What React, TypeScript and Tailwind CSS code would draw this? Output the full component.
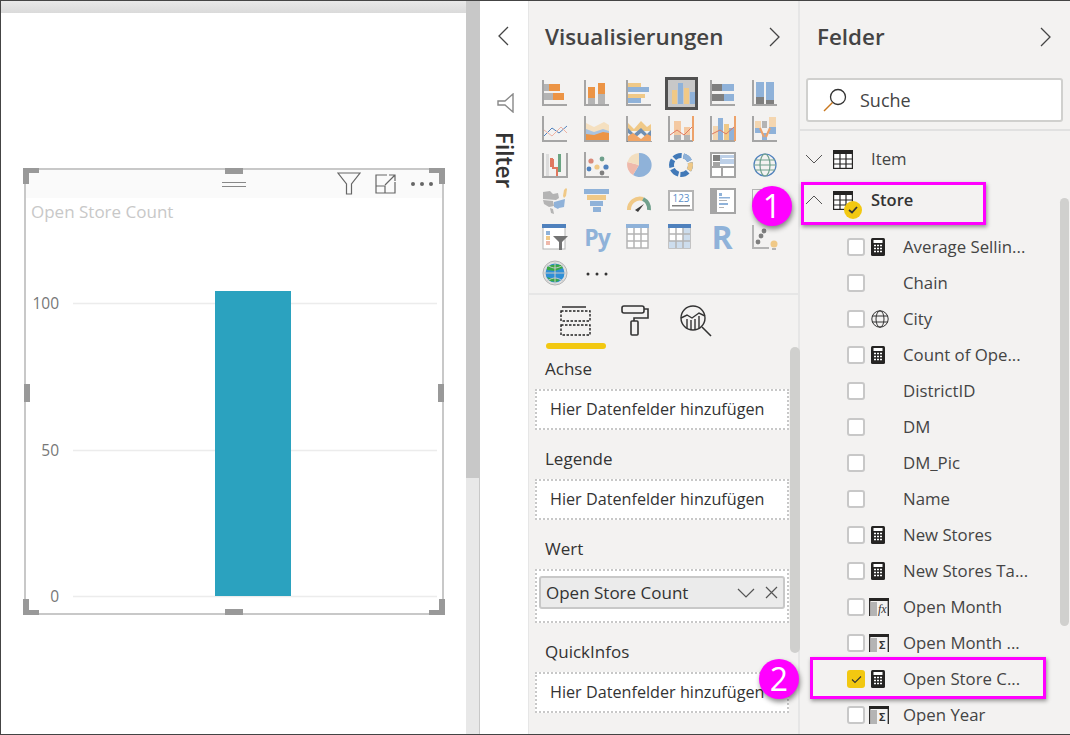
import type { ReactNode } from 'react'

const OR = '#ec9445'
const GR = '#b4b4b4'
const DG = '#7f7f7f'
const BL = '#8fb2d9'
const TN = '#f0c987'
const AX = '#a5a5a5'

function Axis() {
  return <path d="M1 0v25h24" fill="none" stroke={AX} strokeWidth="2" />
}

function Ic({ children }: { children: ReactNode }) {
  return (
    <svg width="26" height="26" viewBox="0 0 26 26" className="block">
      {children}
    </svg>
  )
}

function R({ x, y, w, h, f }: { x: number; y: number; w: number; h: number; f: string }) {
  return <rect x={x} y={y} width={w} height={h} fill={f} />
}

const vizIcons: ReactNode[] = [
  <Ic><Axis /><R x={2} y={4} w={5} h={7} f={GR} /><R x={7} y={4} w={11} h={7} f={OR} /><R x={2} y={13} w={9} h={7} f={GR} /><R x={11} y={13} w={11} h={7} f={OR} /></Ic>,
  <Ic><Axis /><R x={4} y={7} w={7} h={11} f={OR} /><R x={4} y={18} w={7} h={6} f={GR} /><R x={14} y={3} w={7} h={11} f={OR} /><R x={14} y={14} w={7} h={10} f={GR} /></Ic>,
  <Ic><Axis /><R x={2} y={3} w={13} h={4} f={TN} /><R x={2} y={7} w={21} h={5} f={BL} /><R x={2} y={14} w={17} h={4} f={TN} /><R x={2} y={18} w={13} h={5} f={BL} /></Ic>,
  <div className="w-[33px] h-[33px] bg-[#c8c8c8] border-[3px] border-[#505050] flex items-end gap-[1px] pl-[4px] pb-[3px]">
    <div className="w-[5px] h-[14px] bg-[#f0c987]" />
    <div className="w-[5px] h-[21px] bg-[#8fb2d9]" />
    <div className="w-[5px] h-[16px] bg-[#f0c987]" />
    <div className="w-[5px] h-[12px] bg-[#8fb2d9]" />
  </div>,
  <Ic><Axis /><R x={2} y={4} w={10} h={7} f={DG} /><R x={12} y={4} w={12} h={7} f={BL} /><R x={2} y={14} w={12} h={7} f={DG} /><R x={14} y={14} w={10} h={7} f={BL} /></Ic>,
  <Ic><Axis /><R x={4} y={2} w={8} h={15} f={BL} /><R x={4} y={17} w={8} h={7} f={DG} /><R x={14} y={2} w={8} h={18} f={BL} /><R x={14} y={20} w={8} h={4} f={DG} /></Ic>,

  <Ic><Axis /><path d="M2 20l8-8 7 5 8-7" fill="none" stroke="#4f81bd" strokeWidth="1" /><path d="M2 14l8 6 9-9 6 6" fill="none" stroke="#eeb3a4" strokeWidth="1" /></Ic>,
  <Ic><Axis /><path d="M2 7l8 4 10-5 5 3v15H2z" fill="#f5e0c0" /><path d="M2 13l8 3 9-3 6 2v9H2z" fill="#a9c3e0" /><path d="M2 18l8 1 9-3 6 1v7H2z" fill={OR} /></Ic>,
  <Ic><path d="M1 0v26h25" fill="none" stroke="#5a5a5a" strokeWidth="1" /><path d="M2 7l6 6 7-8 6 6 4-3v7H2z" fill={TN} /><path d="M2 12l6 6 7-6 6 6 4-4v6l-4 2-6-5-6 5-7-5z" fill="#6f8fb3" /><path d="M2 20l5-3 8 6 6-5 4 2v5H2z" fill="#f0a566" /></Ic>,
  <Ic><Axis /><R x={6} y={5} w={7} h={14} f="#f4c9a2" /><R x={6} y={19} w={7} h={5} f={GR} /><R x={16} y={11} w={6} h={8} f="#f4c9a2" /><R x={16} y={19} w={6} h={5} f={GR} /><R x={24} y={0} w={2} h={25} f="#eda26a" /><path d="M2 19l7-5 7 5 8-8" fill="none" stroke="#e0785f" strokeWidth="1" /></Ic>,
  <Ic><Axis /><R x={3} y={10} w={5} h={14} f="#f4d6b0" /><R x={8} y={2} w={5} h={22} f={BL} /><R x={14} y={8} w={5} h={16} f={TN} /><R x={19} y={12} w={5} h={12} f={BL} /><R x={24} y={0} w={2} h={25} f="#eda26a" /><path d="M2 18l8-4 6 4 8-7" fill="none" stroke="#e0785f" strokeWidth="1" /></Ic>,
  <Ic><Axis /><R x={3} y={5} w={6} h={7} f="#f4d6b0" /><R x={3} y={12} w={6} h={5} f={BL} /><R x={10} y={5} w={5} h={7} f={GR} /><R x={10} y={17} w={5} h={7} f={BL} /><R x={17} y={1} w={7} h={10} f="#f4d6b0" /><R x={17} y={11} w={7} h={7} f={BL} /><path d="M8 12l4 9M18 12l-4 9" stroke="#eda26a" strokeWidth="2" /></Ic>,

  <Ic><path d="M1 1v24h24V1" fill="none" stroke={AX} strokeWidth="2" /><R x={4} y={2} w={3} h={22} f="#dcdcdc" /><R x={8} y={6} w={3} h={9} f="#e0785f" /><path d="M11 7v9h4v8" fill="none" stroke="#e0785f" strokeWidth="2" /><R x={16} y={2} w={3} h={18} f="#6aa583" /></Ic>,
  <Ic><Axis /><circle cx="7" cy="9" r="2.6" fill="#d98a7a" /><circle cx="18" cy="7" r="2.4" fill="#6fa08c" /><circle cx="13" cy="15" r="2.6" fill={TN} /><circle cx="5" cy="17" r="2.4" fill="#4f81bd" /><circle cx="22" cy="15" r="2.6" fill="#4f81bd" /><circle cx="18" cy="21" r="2.4" fill={DG} /></Ic>,
  <Ic><path d="M13 13V1a12 12 0 1 1-6 22z" fill={BL} /><path d="M13 13L7 23A12 12 0 0 1 1.4 10z" fill="#efb9ab" /><path d="M13 13L1.4 10A12 12 0 0 1 13 1z" fill="#f3dfc0" /></Ic>,
  <Ic>
    <g transform="rotate(-75 13 13)">
      <circle cx="13" cy="13" r="9.5" fill="none" stroke="#4179b8" strokeWidth="5" pathLength="100" strokeDasharray="13.5 3.17" />
      <circle cx="13" cy="13" r="9.5" fill="none" stroke={TN} strokeWidth="5" pathLength="100" strokeDasharray="13.5 86.5" strokeDashoffset="-16.67" />
      <circle cx="13" cy="13" r="9.5" fill="none" stroke={BL} strokeWidth="5" pathLength="100" strokeDasharray="13.5 86.5" />
    </g>
  </Ic>,
  <Ic><rect x="1" y="1" width="24" height="24" fill="#fff" stroke={AX} strokeWidth="2" /><R x={3} y={3} w={7} h={6} f={DG} /><R x={10} y={3} w={14} h={9} f="#bdd0e8" /><R x={3} y={10} w={7} h={4} f={AX} /><R x={12} y={6} w={12} h={1} f="#fff" /><R x={2} y={14} w={22} h={2} f={AX} /><R x={11} y={15} w={2} h={9} f={AX} /></Ic>,
  <Ic><circle cx="13" cy="13" r="11" fill="none" stroke="#4f81bd" strokeWidth="1.2" /><ellipse cx="13" cy="13" rx="5" ry="11" fill="none" stroke="#6fa08c" strokeWidth="1.2" /><path d="M3 8h20M2 13h22M3 18h20" stroke="#6fa08c" strokeWidth="1" /></Ic>,

  <Ic><path d="M1 4l7-1 3 3 5-1 1 5-3 2-13-1z" fill={GR} /><path d="M1 12l10 1 1 5-5 1-5-3z" fill={GR} /><path d="M12 14l11-3-1 8-5 1-1 1-4-2z" fill={BL} /><path d="M8 20l3 1 1 5-3-1z" fill={GR} /><path d="M22 2l2-2 1 1-1 7-2 2-1-2z" fill={TN} /></Ic>,
  <Ic><R x={0} y={1} w={25} h={5} f={BL} /><R x={3} y={7} w={19} h={5} f={TN} /><R x={6} y={13} w={13} h={5} f={BL} /><R x={9} y={19} w={8} h={5} f={BL} /></Ic>,
  <Ic><path d="M3 23a11 11 0 0 1 14-11" transform="translate(0 -1)" fill="none" stroke={TN} strokeWidth="4" /><path d="M17 11a11 11 0 0 1 6 11" fill="none" stroke="#6fa08c" strokeWidth="4" /><path d="M9 22l9-6-6 8z" fill="#3c3c3c" /></Ic>,
  <Ic><rect x="1" y="3" width="24" height="19" fill="#fff" stroke={GR} strokeWidth="2" /><text x="13" y="14" textAnchor="middle" fontSize="10" fontFamily="'Open Sans', sans-serif" fill="#5d8fc9">123</text><R x={4} y={17} w={18} h={1.5} f={DG} /></Ic>,
  <Ic><rect x="1" y="1" width="24" height="24" fill="#fff" stroke={AX} strokeWidth="2" /><R x={2} y={2} w={5} h={22} f={AX} /><R x={9} y={5} w={3} h={3} f={BL} /><R x={9} y={9} w={11} h={1.5} f={BL} /><R x={9} y={12} w={8} h={1} f={GR} /><R x={9} y={15} w={9} h={2} f={BL} /><R x={9} y={19} w={5} h={1} f={GR} /></Ic>,
  <Ic><R x={0} y={1} w={12} h={18} f={GR} /><R x={1} y={2} w={11} h={16} f="#f3f2f1" /></Ic>,

  <Ic><R x={1} y={1} w={22} h={24} f="#fff" /><rect x="1" y="1" width="22" height="24" fill="none" stroke={GR} strokeWidth="1" /><R x={0} y={0} w={24} h={4} f="#4f81bd" /><R x={4} y={7} w={4} h={4} f="#8fb2d9" /><R x={4} y={12} w={4} h={4} f={TN} /><R x={4} y={17} w={4} h={4} f="#efb9ab" /><path d="M11 12h15l-6 6v8h-3v-8z" fill="#737373" /></Ic>,
  <span className="text-[23px] leading-none font-bold text-[#8fb2d9] tracking-[-1px]">Py</span>,
  <Ic><rect x="1" y="2" width="21" height="22" fill="#fff" stroke={GR} strokeWidth="1.5" /><R x={0} y={0} w={23} h={4} f={BL} /><path d="M8 4v20M15 4v20M1 10h21M1 17h21" stroke={GR} strokeWidth="1.5" /></Ic>,
  <Ic><rect x="1" y="2" width="21" height="22" fill="#fff" stroke={GR} strokeWidth="1.5" /><R x={0} y={0} w={23} h={4} f="#4f81bd" /><R x={15} y={4} w={7} h={20} f="#cddded" /><R x={1} y={17} w={21} h={7} f="#cddded" /><path d="M8 4v20M15 4v20M1 10h21M1 17h21" stroke={GR} strokeWidth="1.5" /></Ic>,
  <span className="text-[32px] leading-none font-bold text-[#8fb2d9] -ml-[2px]">R</span>,
  <Ic><path d="M1 1v23h16" fill="none" stroke={GR} strokeWidth="2" /><circle cx="12" cy="7" r="2.4" fill={DG} /><circle cx="9" cy="12" r="2.4" fill={DG} /><circle cx="6" cy="18" r="2.4" fill={DG} /><circle cx="22" cy="20" r="3.5" fill={TN} /><R x={20} y={24} w={4} h={2} f={GR} /></Ic>,

  <Ic><circle cx="13" cy="13" r="12" fill="#dfdfdf" stroke={GR} strokeWidth="1" /><circle cx="13" cy="13" r="9.5" fill="#2f8fd6" /><path d="M5 7c5-3 10-3 14-2l2 3-8 3-8-1zM5 17c4 2 8 0 10 2l3 1-4 2-6-1z" fill="#39a845" /><path d="M13 1v24M1 13h24M5 5c6 4 10 4 16 0M5 21c6-4 10-4 16 0" fill="none" stroke="#c9c9c9" strokeWidth="1" /></Ic>,
  <Ic><circle cx="4" cy="14" r="1.5" fill="#333" /><circle cx="13" cy="14" r="1.5" fill="#333" /><circle cx="22" cy="14" r="1.5" fill="#333" /></Ic>,
]

function VizGrid() {
  return (
    <div className="grid grid-cols-[repeat(6,42px)] auto-rows-[36px] pl-[5px] mt-[2px]">
      {vizIcons.map((icon, idx) => (
        <div key={idx} className="flex items-center justify-center">
          {icon}
        </div>
      ))}
    </div>
  )
}

function Well({ label, children, tall }: { label: string; children?: ReactNode; tall?: boolean }) {
  return (
    <div className="mb-[9px]">
      <div className="h-[40px] flex items-center pl-[16px] text-[17px] text-[#333]">{label}</div>
      <div className={`ml-[6px] w-[254px] bg-white border-2 border-dotted border-[#c8c8c8] ${tall ? 'h-[54px] pt-[5px] px-[2px]' : 'h-[41px] flex items-center pl-[13px]'} text-[16.2px] text-[#333]`}>
        {children ?? 'Hier Datenfelder hinzufügen'}
      </div>
    </div>
  )
}

function VizPane() {
  return (
    <div className="relative w-[272px] h-full bg-[#f3f2f1] border-r-2 border-l border-[#e6e6e6] shrink-0">
      <div className="h-[72px] flex items-center justify-between pl-[16px] pr-[17px]">
        <span className="text-[22.4px] font-semibold text-[#444]">Visualisierungen</span>
        <svg width="12" height="20" viewBox="0 0 12 20" fill="none" stroke="#444" strokeWidth="1.3"><path d="M1 1l9 9-9 9" /></svg>
      </div>
      <VizGrid />
      <div className="h-[2px] bg-[#e6e6e6] mt-[2px]" />
      <div className="flex pl-[17px] h-[54px]">
        <div className="w-[60px] flex flex-col items-center">
          <svg className="mt-[10px]" width="32" height="32" viewBox="0 0 32 32" fill="none" stroke="#222" strokeWidth="1.4">
            <path d="M2 2h24" />
            <rect x="1" y="6" width="29" height="10" strokeDasharray="2.5 1.5" />
            <rect x="1" y="20" width="29" height="10" strokeDasharray="2.5 1.5" />
          </svg>
          <div className="mt-auto w-[60px] h-[6px] rounded-full bg-[#f2c811]" />
        </div>
        <div className="w-[60px] flex justify-center">
          <svg className="mt-[10px]" width="30" height="32" viewBox="0 0 30 32" fill="none" stroke="#333" strokeWidth="1.6">
            <rect x="1" y="1" width="22" height="7" rx="2" />
            <path d="M23 4h4v9H13v3" />
            <rect x="10" y="16" width="7" height="14" rx="1" />
          </svg>
        </div>
        <div className="w-[60px] flex justify-center">
          <svg className="mt-[10px]" width="32" height="32" viewBox="0 0 32 32" fill="none" stroke="#333" strokeWidth="1.4">
            <circle cx="13" cy="13" r="12" />
            <path d="M1 13l6-3 5 3 7-5 6 3" />
            <path d="M7 14v9M11 15v10M15 14v11M19 11v12" />
            <path d="M22 22l9 9" strokeWidth="1.6" />
          </svg>
        </div>
      </div>
      <Well label="Achse" />
      <Well label="Legende" />
      <Well label="Wert" tall>
        <div className="h-[33px] bg-[#ebebeb] border-2 border-[#c8c8c8] rounded-[3px] flex items-center pl-[5px] pr-[5px] text-[17px]">
          <span className="flex-1">Open Store Count</span>
          <svg width="18" height="10" viewBox="0 0 18 10" fill="none" stroke="#555" strokeWidth="1.2"><path d="M1 1l8 8 8-8" /></svg>
          <svg className="ml-[10px]" width="13" height="13" viewBox="0 0 13 13" fill="none" stroke="#555" strokeWidth="1.2"><path d="M1 1l11 11M12 1L1 12" /></svg>
        </div>
      </Well>
      <Well label="QuickInfos" />
      {/* scroll thumb */}
      <div className="absolute left-[261px] top-[346px] w-[10px] h-[306px] rounded-full bg-[#d0d0ce]" />
    </div>
  )
}

function TableIcon() {
  return (
    <svg width="20" height="19" viewBox="0 0 20 19" fill="none" stroke="#252423" strokeWidth="1.2">
      <rect x="0.6" y="0.6" width="18.8" height="17.8" fill="#fff" />
      <rect x="0" y="0" width="20" height="4" fill="#252423" stroke="none" />
      <path d="M7 4v14M13 4v14M1 9h18M1 14h18" />
    </svg>
  )
}

function CalcIcon() {
  return (
    <svg width="14" height="18" viewBox="0 0 14 18">
      <rect width="14" height="18" rx="1.5" fill="#252423" />
      <rect x="2.5" y="2" width="9" height="3" fill="#fff" />
      <path d="M3 7.5h8M3 10.5h8M3 13.5h8" stroke="#fff" strokeWidth="1.6" strokeDasharray="2 1" />
    </svg>
  )
}

function GlobeIcon() {
  return (
    <svg width="18" height="18" viewBox="0 0 18 18" fill="none" stroke="#333" strokeWidth="1">
      <circle cx="9" cy="9" r="8.2" />
      <ellipse cx="9" cy="9" rx="4" ry="8.2" />
      <path d="M1 6h16M1 12h16" />
    </svg>
  )
}

function ColIcon({ fx }: { fx?: boolean }) {
  return (
    <svg className="-ml-[2px] overflow-visible" width="20" height="18" viewBox="0 0 20 18" fill="none" stroke="#252423">
      <path d="M0.7 18V0.7H19.3V18" strokeWidth="1.3" fill="#f3f2f1" />
      <rect x="0" y="0" width="20" height="3" fill="#252423" stroke="none" />
      <rect x="2" y="4" width="6" height="14" fill="#b4b4b4" stroke="none" />
      {fx ? (
        <text x="9" y="15" fontSize="12" fontStyle="italic" fontFamily="'Liberation Serif', serif" fill="#333" stroke="none">fx</text>
      ) : (
        <text x="10" y="15" fontSize="11" fontWeight="700" fontFamily="'Open Sans', sans-serif" fill="#333" stroke="none">Σ</text>
      )}
    </svg>
  )
}

const fields: { name: string; icon?: ReactNode; checked?: boolean }[] = [
  { name: 'Average Sellin...', icon: <CalcIcon /> },
  { name: 'Chain' },
  { name: 'City', icon: <GlobeIcon /> },
  { name: 'Count of Ope...', icon: <CalcIcon /> },
  { name: 'DistrictID' },
  { name: 'DM' },
  { name: 'DM_Pic' },
  { name: 'Name' },
  { name: 'New Stores', icon: <CalcIcon /> },
  { name: 'New Stores Ta...', icon: <CalcIcon /> },
  { name: 'Open Month', icon: <ColIcon fx /> },
  { name: 'Open Month ...', icon: <ColIcon /> },
  { name: 'Open Store C...', icon: <CalcIcon />, checked: true },
  { name: 'Open Year', icon: <ColIcon /> },
]

function FieldRow({ name, icon, checked }: { name: string; icon?: ReactNode; checked?: boolean }) {
  return (
    <div className="h-[36px] flex items-center pl-[47px] text-[16.8px] text-[#444]">
      {checked ? (
        <div className="w-[18px] h-[18px] rounded-[3px] bg-[#f2c811] flex items-center justify-center">
          <svg width="11" height="9" viewBox="0 0 11 9" fill="none" stroke="#333" strokeWidth="1.1"><path d="M1 4.5l3 3 6-6" /></svg>
        </div>
      ) : (
        <div className="w-[18px] h-[18px] rounded-[3px] bg-white border-2 border-[#c8c8c8]" />
      )}
      <div className="w-[38px] pl-[6px] flex items-center">{icon}</div>
      <span>{name}</span>
    </div>
  )
}

function FieldsPane() {
  return (
    <div className="relative flex-1 h-full bg-[#f3f2f1]">
      <div className="h-[72px] flex items-center justify-between pl-[17px] pr-[18px]">
        <span className="text-[22.4px] font-semibold text-[#444]">Felder</span>
        <svg width="12" height="20" viewBox="0 0 12 20" fill="none" stroke="#444" strokeWidth="1.3"><path d="M1 1l9 9-9 9" /></svg>
      </div>
      <div className="ml-[6px] mt-[5px] w-[257px] h-[44px] bg-white border-2 border-[#d0d0ce] rounded-[3px] flex items-center pl-[15px] text-[18px] text-[#444]">
        <svg width="24" height="24" viewBox="0 0 24 24" fill="none">
          <circle cx="15" cy="9" r="7.5" stroke="#333" strokeWidth="1.3" />
          <path d="M9.5 14.5L1 23" stroke="#c9781f" strokeWidth="1.5" />
        </svg>
        <span className="ml-[13px]">Suche</span>
      </div>
      <div className="h-[2px] bg-[#e1e1e1] mt-[7px]" />
      <div className="pt-[10px]">
        <div className="h-[36px] flex items-center pl-[5px] text-[16.8px] text-[#444]">
          <svg width="18" height="10" viewBox="0 0 18 10" fill="none" stroke="#555" strokeWidth="1"><path d="M1 1l8 8 8-8" /></svg>
          <div className="ml-[10px] w-[38px]"><TableIcon /></div>
          <span>Item</span>
        </div>
        <div className="h-[36px] mt-[5px] flex items-center pl-[5px] text-[16.5px] font-semibold text-[#333]">
          <svg width="18" height="10" viewBox="0 0 18 10" fill="none" stroke="#555" strokeWidth="1"><path d="M1 9l8-8 8 8" /></svg>
          <div className="ml-[10px] w-[38px] relative">
            <TableIcon />
            <div className="absolute left-[11px] top-[10px] w-[18px] h-[18px] rounded-full bg-[#f2c811] flex items-center justify-center">
              <svg width="10" height="8" viewBox="0 0 10 8" fill="none" stroke="#333" strokeWidth="1.8"><path d="M1 4l3 2.5L9 1" /></svg>
            </div>
          </div>
          <span>Store</span>
        </div>
        <div className="mt-[11px]">
          {fields.map((f) => (
            <FieldRow key={f.name} {...f} />
          ))}
        </div>
      </div>
      {/* scroll thumb */}
      <div className="absolute left-[260px] top-[197px] w-[9px] h-[428px] rounded-full bg-[#d0d0ce]" />
    </div>
  )
}

function Corner({ className, d }: { className: string; d: string }) {
  return (
    <svg className={`absolute ${className}`} width="16" height="16" viewBox="0 0 16 16">
      <path d={d} fill="#999" />
    </svg>
  )
}

function Visual() {
  return (
    <div className="relative ml-[23px] mt-[155px] w-[420px] h-[447px] border-2 border-[#c8c8c8]">
      <div className="h-[28px] bg-[#fafafa] flex items-center relative">
        <div className="ml-[196px] w-[24px] h-[5px] border-y border-[#888]" />
        <svg className="ml-[91px]" width="24" height="24" viewBox="0 0 24 24" fill="none" stroke="#666" strokeWidth="1.2">
          <path d="M1 1h22l-8.5 11v10h-5V12z" />
        </svg>
        <svg className="ml-[14px]" width="21" height="20" viewBox="0 0 21 20" fill="none" stroke="#666" strokeWidth="1.2">
          <path d="M12 1H1v18h19V8" />
          <path d="M1 12h9v7" />
          <path d="M10 11L20 1M14 1h6v6" />
        </svg>
        <div className="ml-[15px] flex gap-[5px]">
          <div className="w-[4px] h-[4px] rounded-full bg-[#666]" />
          <div className="w-[4px] h-[4px] rounded-full bg-[#666]" />
          <div className="w-[4px] h-[4px] rounded-full bg-[#666]" />
        </div>
      </div>
      <div className="pl-[5px] pt-[3px] h-[29px] text-[17px] leading-[22px] text-[#c8c8c8]">Open Store Count</div>
      <svg width="416" height="386" viewBox="0 0 416 386" className="block">
        <path d="M47 76.5h364M47 223.5h364M47 369.5h364" stroke="#ececec" strokeWidth="1.5" />
        <rect x="189" y="64" width="76" height="305" fill="#2ba2bf" />
        <g fontFamily="'Open Sans', sans-serif" fontSize="15.5" fill="#777" textAnchor="end">
          <text x="33" y="82">100</text>
          <text x="33" y="229">50</text>
          <text x="33" y="375">0</text>
        </g>
      </svg>
      <Corner className="-left-[3px] -top-[2px]" d="M0 0h16v5H6v11H0z" />
      <Corner className="-right-[3px] -top-[2px]" d="M0 0h16v16h-6V5H0z" />
      <Corner className="-left-[3px] -bottom-[2px]" d="M0 0h6v11h10v5H0z" />
      <Corner className="-right-[3px] -bottom-[2px]" d="M10 0h6v16H0v-5h10z" />
      <div className="absolute left-[199px] -top-[2px] w-[18px] h-[6px] bg-[#999]" />
      <div className="absolute left-[199px] -bottom-[2px] w-[18px] h-[6px] bg-[#999]" />
      <div className="absolute -left-[2px] top-[214px] w-[6px] h-[18px] bg-[#999]" />
      <div className="absolute -right-[2px] top-[214px] w-[6px] h-[18px] bg-[#999]" />
    </div>
  )
}

function Badge({ n, className }: { n: number; className: string }) {
  return (
    <div className={`absolute w-[40px] h-[40px] rounded-full bg-[#ff00ff] text-white text-[32px] leading-none flex items-center justify-center shadow-[1px_3px_5px_rgba(0,0,0,0.45)] ${className}`}>
      {n}
    </div>
  )
}

export default function App() {
  return (
    <div className="relative w-[1070px] h-[735px] overflow-hidden bg-white border-t border-l border-b border-[#444] flex font-['Open_Sans',sans-serif]">
      {/* report canvas */}
      <div className="w-[465px] h-full shrink-0">
        <div className="h-[12px] bg-gradient-to-b from-[#e8e8e8] to-[#dadada]" />
        <Visual />
      </div>
      <div className="w-[14px] h-full shrink-0 flex flex-col border-r border-[#c8c8c8]">
        <div className="h-[477px] bg-[#c8c8c8]" />
        <div className="flex-1 bg-[#e8e8e8]" />
      </div>
      {/* filter pane */}
      <div className="w-[48px] h-full shrink-0 bg-white flex flex-col items-center">
        <svg className="mt-[25px] -ml-[2px]" width="12" height="20" viewBox="0 0 12 20" fill="none" stroke="#444" strokeWidth="1.3"><path d="M11 1l-9 9 9 9" /></svg>
        <svg className="mt-[47px] ml-[2px]" width="18" height="20" viewBox="0 0 18 20" fill="none" stroke="#888" strokeWidth="1.4"><path d="M17 1v18L9 12H2V8h7z" /></svg>
        <div className="mt-[19px] [writing-mode:vertical-rl] text-[22.5px] font-semibold text-[#333] leading-none">Filter</div>
      </div>
      <VizPane />
      <FieldsPane />
      {/* annotations */}
      <div className="absolute left-[800px] top-[181px] w-[185px] h-[43px] border-[3px] border-[#ff00ff] shadow-[1px_2px_4px_rgba(0,0,0,0.4)]" />
      <div className="absolute left-[809px] top-[656px] w-[236px] h-[42px] border-[3px] border-[#ff00ff] shadow-[1px_2px_4px_rgba(0,0,0,0.4)]" />
      <Badge n={1} className="left-[751px] top-[185px]" />
      <Badge n={2} className="left-[758px] top-[658px]" />
    </div>
  )
}
